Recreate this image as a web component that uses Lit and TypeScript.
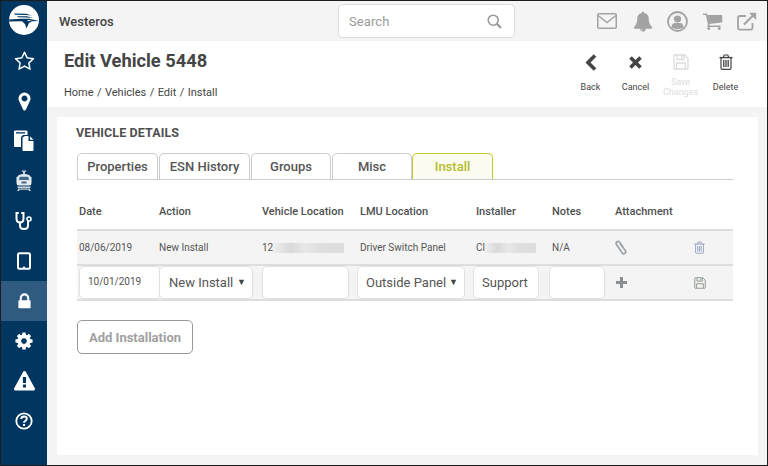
import { LitElement, html, css } from "lit";
import { customElement } from "lit/decorators.js";

const fa = (d: string, size: number, cls = "") =>
  html`<svg class=${cls} width=${size} height=${size} viewBox="0 0 1792 1792" fill="currentColor"><path d=${d}></path></svg>`;

const P = {
  star: "M1201 1004l306-297-422-62-189-382-189 382-422 62 306 297-73 421 378-199 377 199zm527-357q0 22-26 48l-363 354 86 500q1 7 1 20 0 50-41 50-19 0-40-12l-449-236-449 236q-22 12-40 12-21 0-31.500-14.500t-10.500-35.500q0-6 2-20l86-500-364-354q-25-27-25-48 0-37 56-46l502-73 225-455q19-41 49-41t49 41l225 455 502 73q56 9 56 46z",
  pin: "M1152 640q0-106-75-181t-181-75-181 75-75 181 75 181 181 75 181-75 75-181zm256 0q0 109-33 179l-364 774q-16 33-47.500 52t-67.500 19-67.500-19-46.500-52l-365-774q-33-70-33-179 0-212 150-362t362-150 362 150 150 362z",
  lock: "M640 768h512v-192q0-106-75-181t-181-75-181 75-75 181v192zm832 96v576q0 40-28 68t-68 28h-960q-40 0-68-28t-28-68v-576q0-40 28-68t68-28h32v-192q0-184 132-316t316-132 316 132 132 316v192h32q40 0 68 28t28 68z",
  cog: "M1152 896q0-106-75-181t-181-75-181 75-75 181 75 181 181 75 181-75 75-181zm512-109v222q0 12-8 23t-20 13l-185 28q-19 54-39 91 35 50 107 138 10 12 10 25t-9 23q-27 37-99 108t-94 71q-12 0-26-9l-138-108q-44 23-91 38-16 136-29 186-7 28-36 28h-222q-14 0-24.500-8.500t-11.500-21.500l-28-184q-49-16-90-37l-141 107q-10 9-25 9-14 0-25-11-126-114-165-168-7-10-7-23 0-12 8-23 15-21 51-66.500t54-70.500q-27-50-41-99l-183-27q-13-2-21-12.500t-8-23.500v-222q0-12 8-23t19-13l186-28q14-46 39-92-40-57-107-138-10-12-10-24 0-10 9-23 26-36 98.500-107.500t94.500-71.500q13 0 26 10l138 107q44-23 91-38 16-136 29-186 7-28 36-28h222q14 0 24.500 8.500t11.500 21.500l28 184q49 16 90 37l142-107q9-9 24-9 13 0 25 10 129 119 165 170 7 8 7 22 0 12-8 23-15 21-51 66.500t-54 70.500q26 50 41 98l183 28q13 2 21 12.500t8 23.500z",
  warn: "M1024 1375v-190q0-14-9.500-23.500t-22.500-9.500h-192q-13 0-22.500 9.500t-9.500 23.500v190q0 14 9.500 23.500t22.500 9.500h192q13 0 22.500-9.500t9.500-23.500zm-2-374l18-459q0-12-10-19-13-11-24-11h-220q-11 0-24 11-10 7-10 21l17 457q0 10 10 16.500t24 6.500h185q14 0 23.500-6.500t10.500-16.500zm-14-934l768 1408q35 63-2 126-17 29-46.500 46t-63.500 17h-1536q-34 0-63.500-17t-46.500-46q-37-63-2-126l768-1408q17-31 47-49t65-18 65 18 47 49z",
  bell: "M912 1696q0-16-16-16-59 0-101.500-42.500t-42.500-101.500q0-16-16-16t-16 16q0 73 51.500 124.500t124.500 51.500q16 0 16-16zm816-288q0 52-38 90t-90 38h-448q0 106-75 181t-181 75-181-75-75-181h-448q-52 0-90-38t-38-90q50-42 91-88t85-119.500 74.500-158.500 50-206 19.500-260q0-152 117-282.500t307-158.500q-8-19-8-39 0-40 28-68t68-28 68 28 28 68q0 20-8 39 190 28 307 158.500t117 282.500q0 139 19.500 260t50 206 74.500 158.500 85 119.500 91 88z",
  cart: "M704 1536q0 52-38 90t-90 38-90-38-38-90 38-90 90-38 90 38 38 90zm896 0q0 52-38 90t-90 38-90-38-38-90 38-90 90-38 90 38 38 90zm128-1088v512q0 24-16.500 42.500t-40.500 21.500l-1044 122q13 60 13 70 0 16-24 64h920q26 0 45 19t19 45-19 45-45 19h-1024q-26 0-45-19t-19-45q0-11 8-31.500t16-36 21.500-40 15.500-29.500l-177-823h-204q-26 0-45-19t-19-45 19-45 45-19h256q16 0 28.500 6.500t19.500 15.500 13 24.500 8 26 5.500 29.500 4.500 26h1201q26 0 45 19t19 45z",
};

const logo = html`<svg width="30" height="30" viewBox="0 0 30 30">
  <circle cx="15" cy="15" r="15" fill="#fff"></circle>
  <path d="M5 8.500 L17 8.800 L23 10.500 L17 10 L6 9.800 Z" fill="#003660"></path>
  <path d="M8 11.200 L18 11.300 L24 13 L18 12.600 L9 12.300 Z" fill="#003660"></path>
  <path d="M0 14.500 L12 13.800 L20 13.800 L30 16 L23 16.300 L20 18 L17.500 23.500 L16 19 L13 16.300 L0.200 16.500 Z" fill="#003660"></path>
  <path d="M18 15 L23 15.300 L19.500 16.200 Z" fill="#fff"></path>
</svg>`;

const docsIcon = html`<svg width="22" height="22" viewBox="0 0 22 22">
  <path d="M1 1.500 Q1 .5 2 .5 H13.500 Q14.500 .5 14.500 1.500 V5 H10 L8 7 V17 H2 Q1 17 1 16 Z" fill="#fff"></path>
  <rect x="3" y="2.200" width="9" height="1.300" fill="#003660"></rect>
  <path d="M9.500 7.500 L12 6 H15.500 V11 H20.500 V20 Q20.500 21 19.500 21 H10.500 Q9.500 21 9.500 20 Z" fill="#fff"></path>
  <path d="M17 6.200 L20.500 9.700 H17 Z" fill="#fff"></path>
</svg>`;

const trainIcon = html`<svg width="22" height="22" viewBox="0 0 22 22">
  <path d="M8.500 .5 H13.500 L12.500 2.200 H9.500 Z" fill="#b9c6d2"></path>
  <path d="M10 2 H12 V4 H10 Z" fill="#b9c6d2"></path>
  <path d="M6 5 Q11 2.800 16 5 L18.500 7.500 V13 Q18.500 15.500 16.500 15.500 H5.500 Q3.500 15.500 3.500 13 V7.500 Z" fill="#e6ebf0"></path>
  <path d="M6.800 6.800 H15.200 L16.200 10 H5.800 Z" fill="#44688a"></path>
  <rect x="8.500" y="11.500" width="5" height="2" fill="#44688a"></rect>
  <rect x="4.500" y="16.500" width="13" height="1.400" fill="#dfe5ea"></rect>
  <path d="M5.500 18.500 H16.500 L18 21 H16 L15.500 19.800 H6.500 L6 21 H4 Z" fill="#cfd8e0"></path>
</svg>`;

const stethIcon = html`<svg width="20" height="20" viewBox="0 0 20 20" fill="none" stroke="#fff" stroke-width="2" stroke-linecap="round">
  <path d="M4 2 H2.500 V7.500 Q2.500 11.500 6 11.500 Q9.500 11.500 9.500 7.500 V2 H8"></path>
  <path d="M6 11.500 V14.500 Q6 18 10 18 Q14 18 14 14.500 V10"></path>
  <circle cx="15" cy="8" r="2" stroke-width="1.600"></circle>
</svg>`;

const tabletIcon = html`<svg width="16" height="18" viewBox="0 0 16 18" fill="none">
  <rect x="2" y="1.200" width="12" height="15.600" rx="1.500" stroke="#fff" stroke-width="2"></rect>
  <rect x="7" y="14.600" width="2" height="1.400" fill="#fff"></rect>
</svg>`;

const helpIcon = html`<svg width="18" height="18" viewBox="0 0 18 18" fill="none">
  <circle cx="9" cy="9" r="7.700" stroke="#fff" stroke-width="1.800"></circle>
  <path d="M6.200 7 Q6.400 4.500 9 4.500 Q11.800 4.500 11.800 6.800 Q11.800 8 10.400 8.800 Q9 9.600 9 10.800" stroke="#fff" stroke-width="2"></path>
  <rect x="8" y="12" width="2" height="2" fill="#fff"></rect>
</svg>`;

const mailIcon = html`<svg width="20" height="16" viewBox="0 0 20 16" fill="none" stroke="#a3a3a3" stroke-width="1.500">
  <rect x=".75" y=".75" width="18.500" height="14.500" rx="1"></rect>
  <path d="M1 2.500 L10 9.500 L19 2.500"></path>
</svg>`;

const userIcon = html`<svg width="21" height="21" viewBox="0 0 21 21">
  <circle cx="10.500" cy="10.500" r="9.500" fill="none" stroke="#a3a3a3" stroke-width="1.800"></circle>
  <circle cx="10.500" cy="8" r="3.600" fill="#a3a3a3"></circle>
  <path d="M4.500 16.500 Q4.500 12 8 12 H13 Q16.500 12 16.500 16.500 Q10.500 20 4.500 16.500 Z" fill="#a3a3a3"></path>
</svg>`;

const extIcon = html`<svg width="20" height="19" viewBox="0 0 20 19" fill="none" stroke="#a3a3a3" stroke-width="1.800">
  <path d="M15.500 11 V15.500 Q15.500 17.600 13.500 17.600 H3 Q1 17.600 1 15.500 V6 Q1 4 3 4 H9"></path>
  <path d="M7 12.500 L17 2.500" stroke-width="2.200"></path>
  <path d="M12 .8 H19.200 V8 Z" fill="#a3a3a3" stroke="none"></path>
</svg>`;

const searchIcon = html`<svg width="15" height="15" viewBox="0 0 15 15" fill="none" stroke="#999" stroke-width="1.600">
  <circle cx="6.200" cy="6.200" r="5"></circle>
  <path d="M9.800 9.800 L14 14" stroke-width="2.200"></path>
</svg>`;

const saveIcon = (c: string, size: number) => html`<svg width=${size} height=${size} viewBox="0 0 16 16" fill="none" stroke=${c} stroke-width="1.300">
  <path d="M1 1.700 Q1 1 1.700 1 H11.800 L15 4.200 V14.300 Q15 15 14.300 15 H1.700 Q1 15 1 14.300 Z"></path>
  <path d="M4 1 V5.500 H11 V1"></path>
  <rect x="8.300" y="2" width="1.300" height="2.500" fill=${c} stroke="none"></rect>
  <path d="M3.500 15 V9 H12.500 V15"></path>
</svg>`;

const trashIcon = (c: string, w: number, h: number) => html`<svg width=${w} height=${h} viewBox="0 0 14 16" fill="none" stroke=${c} stroke-width="1.200">
  <path d="M.5 3.600 H13.500" stroke-width="1.400"></path>
  <path d="M4.300 3.400 L5.200 1 H8.800 L9.700 3.400"></path>
  <path d="M2 3.600 V14 Q2 15.300 3.300 15.300 H10.700 Q12 15.300 12 14 V3.600"></path>
  <path d="M4.800 6 V13 M7 6 V13 M9.200 6 V13" stroke-width="1.300"></path>
</svg>`;

const clipIcon = html`<svg width="12" height="15" viewBox="0 0 12 15" fill="none" stroke="#9ea3a8" stroke-width="1.700">
  <path d="M10.500 11 L4.800 2.400 Q3.700 .8 2.100 1.800 Q.5 3 1.500 4.600 L7.200 13 Q8.300 14.400 9.800 13.400 Q11.300 12.300 10.400 10.800 L5 3.600"></path>
</svg>`;

const backIcon = html`<svg width="12" height="17" viewBox="0 0 12 17" fill="none" stroke="#444" stroke-width="3.600"><path d="M10 1.500 L3 8.500 L10 15.500"></path></svg>`;
const cancelIcon = html`<svg width="13" height="13" viewBox="0 0 13 13" fill="none" stroke="#444" stroke-width="3.600"><path d="M1.500 1.500 L11.500 11.500 M11.500 1.500 L1.500 11.500"></path></svg>`;
const plusIcon = html`<svg width="11" height="11" viewBox="0 0 11 11" fill="#8a8f94"><path d="M4 0 H7 V4 H11 V7 H7 V11 H4 V7 H0 V4 H4 Z"></path></svg>`;

const NAV = [
  fa(P.star, 21), fa(P.pin, 21), docsIcon, trainIcon, stethIcon, tabletIcon,
  fa(P.lock, 19), fa(P.cog, 20), fa(P.warn, 21), helpIcon,
];

@customElement("app-root")
export class AppRoot extends LitElement {
  static styles = css`
    :host {
      display: grid;
      grid-template-columns: 46px 1fr;
      width: 768px;
      height: 466px;
      box-sizing: border-box;
      border: 1px solid #1c1c1c;
      font-family: Roboto, "Liberation Sans", sans-serif;
      color: #4a4a4a;
      background: #f4f4f4;
      overflow: hidden;
    }
    .side { background: #003660; color: #fff; display: flex; flex-direction: column; }
    .logo { height: 40px; display: flex; align-items: center; justify-content: center; margin-top: -1px; margin-bottom: 1px; }
    .nav { height: 40px; display: flex; align-items: center; justify-content: center; }
    .nav.on { background: #2f5b80; }
    .main { display: flex; flex-direction: column; min-width: 0; }
    .top { height: 40px; display: flex; align-items: center; background: #f4f4f4; box-sizing: border-box; padding-left: 12px; }
    .brand { font-size: 13px; font-weight: 500; width: 279px; color: #444; }
    .search {
      width: 177px; height: 34px; box-sizing: border-box; background: #fff; border: 1px solid #ddd; border-radius: 5px;
      display: flex; align-items: center; justify-content: space-between; padding: 0 12px 0 10px;
      font-size: 13px; color: #9a9a9a; letter-spacing: .1px;
    }
    .topicons { display: flex; align-items: center; margin-left: 82px; height: 40px; }
    .ti { display: flex; align-items: center; justify-content: center; color: #a3a3a3; }
    .head { height: 66px; background: #fff; display: flex; justify-content: space-between; padding: 0 20px 0 17px; }
    .titles { display: flex; flex-direction: column; }
    h1 { margin: 7px 0 0; font-size: 18.300px; line-height: 26px; font-weight: 700; color: #454545; }
    .crumb { font-size: 11px; line-height: 14px; margin-top: 12px; color: #454545; word-spacing: .7px; }
    .acts { display: flex; margin-right: -1px; }
    .act { width: 45px; display: flex; flex-direction: column; align-items: center; font-size: 9px; line-height: 10px; color: #444; text-align: center; }
    .act .ic { height: 20px; margin-top: 11px; margin-bottom: 10px; display: flex; align-items: center; justify-content: center; }
    .act.off { color: #dcdcdc; }
    .act.off span { margin-top: -5px; }
    .card { background: #fff; margin: 10px 9px 10px 10px; padding: 0 25px 0 20px; flex: 1; display: flex; flex-direction: column; }
    h2 { margin: 8px 0 0 -1px; font-size: 12.500px; line-height: 15px; font-weight: 700; color: #4f4f4f; letter-spacing: .1px; }
    .tabs { display: flex; gap: 1px; margin-top: 13px; height: 26px; border-bottom: 1px solid #ccc; }
    .tab {
      box-sizing: border-box; height: 26px; border: 1px solid #ccc; border-bottom: 0; border-radius: 5px 5px 0 0;
      display: flex; align-items: center; justify-content: center; font-size: 13px; font-weight: 500; color: #555;
    }
    .tab.on { color: #b5bd2a; border-color: #c4c92e; background: #fbfbf2; margin-left: -1px; }
    .row { display: grid; font-size: 11px; padding-left: 2px; }
    .hd { grid-template-columns: var(--cols); align-items: center; font-size: 11px; font-weight: 500; color: #4f4f4f; border-bottom: 2px solid #ddd; box-sizing: border-box; padding-top: 14px; height: 51px; }
    .r1 { grid-template-columns: var(--cols); height: 35px; padding-bottom: 2px; align-items: center; background: #f4f4f4; border-bottom: 2px solid #ddd; box-sizing: border-box; font-size: 10px; color: #555; }
    .r2 {
      grid-template-columns: 80px 103px 95px 116px 76px 66px 79px 39px;
      height: 35px; align-items: start; background: #f4f4f4; border-bottom: 2px solid #ddd; box-sizing: border-box;
    }
    .in {
      box-sizing: border-box; height: 33px; background: #fff; border: 1px solid #e0e0e0; border-radius: 5px;
      display: flex; align-items: center; font-size: 13px; color: #555; white-space: nowrap;
    }
    .date { width: 82px; font-size: 10px; padding: 0 0 2px 8px; }
    .sel { padding-left: 9px; justify-content: space-between; padding-right: 6px; position: relative; z-index: 1; }
    .sel.lmu { padding-left: 8px; }
    .sel i { font-style: normal; font-size: 9px; color: #444; margin-top: -2px; }
    .cell { display: flex; align-items: center; height: 33px; }
    .red { display: flex; align-items: center; }
    .blur { display: block; height: 10px; background: linear-gradient(90deg, #eee 0, #d9d9d9 25%, #e8e8e8 45%, #dedede 70%, #dcdcdc 100%); }
    .add {
      margin-top: 19px; width: 116px; height: 34px; box-sizing: border-box; border: 1px solid #999; border-radius: 5px;
      display: flex; align-items: center; justify-content: center; font-size: 13px; font-weight: 700; color: #a0a0a0;
    }
  `;

  render() {
    const cols = "80px 103px 98px 116px 76px 63px 79px 39px";
    return html`
      <div class="side">
        <div class="logo">${logo}</div>
        ${NAV.map((n, i) => html`<div class="nav ${i === 6 ? "on" : ""}">${n}</div>`)}
      </div>
      <div class="main">
        <div class="top">
          <div class="brand">Westeros</div>
          <div class="search"><span>Search</span>${searchIcon}</div>
          <div class="topicons">
            <div class="ti" style="width:20px">${mailIcon}</div>
            <div class="ti" style="width:20px;margin-left:16px">${fa(P.bell, 21)}</div>
            <div class="ti" style="width:21px;margin-left:14px">${userIcon}</div>
            <div class="ti" style="width:21px;margin-left:14px">${fa(P.cart, 22)}</div>
            <div class="ti" style="width:20px;margin-left:14px">${extIcon}</div>
          </div>
        </div>
        <div class="head">
          <div class="titles">
            <h1>Edit Vehicle 5448</h1>
            <div class="crumb">Home / Vehicles / Edit / Install</div>
          </div>
          <div class="acts">
            <div class="act"><div class="ic">${backIcon}</div><span>Back</span></div>
            <div class="act"><div class="ic">${cancelIcon}</div><span>Cancel</span></div>
            <div class="act off"><div class="ic">${saveIcon("#dcdcdc", 16)}</div><span>Save Changes</span></div>
            <div class="act"><div class="ic">${trashIcon("#444", 14, 16)}</div><span>Delete</span></div>
          </div>
        </div>
        <div class="card" style="--cols:${cols}">
          <h2>VEHICLE DETAILS</h2>
          <div class="tabs">
            <div class="tab" style="width:81px">Properties</div>
            <div class="tab" style="width:91px">ESN History</div>
            <div class="tab" style="width:80px">Groups</div>
            <div class="tab" style="width:80px">Misc</div>
            <div class="tab on" style="width:81px">Install</div>
          </div>
          <div class="row hd">
            <div>Date</div><div>Action</div><div>Vehicle Location</div><div>LMU Location</div>
            <div>Installer</div><div>Notes</div><div>Attachment</div><div></div>
          </div>
          <div class="row r1">
            <div>08/06/2019</div>
            <div>New Install</div>
            <div class="red">12<span class="blur" style="width:71px"></span></div>
            <div>Driver Switch Panel</div>
            <div class="red">Cl<span class="blur" style="width:51px"></span></div>
            <div>N/A</div>
            <div class="cell">${clipIcon}</div>
            <div class="cell">${trashIcon("#98a6c0", 11, 13)}</div>
          </div>
          <div class="row r2">
            <div class="in date">10/01/2019</div>
            <div class="in sel" style="width:94px">New Install<i>▼</i></div>
            <div class="in" style="width:87px"></div>
            <div class="in sel lmu" style="width:108px">Outside Panel<i>▼</i></div>
            <div class="in" style="width:66px;padding-left:8px">Support</div>
            <div class="in" style="width:56px"></div>
            <div class="cell" style="padding-left:1px">${plusIcon}</div>
            <div class="cell">${saveIcon("#8f988f", 12)}</div>
          </div>
          <div class="add">Add Installation</div>
        </div>
      </div>
    `;
  }
}
